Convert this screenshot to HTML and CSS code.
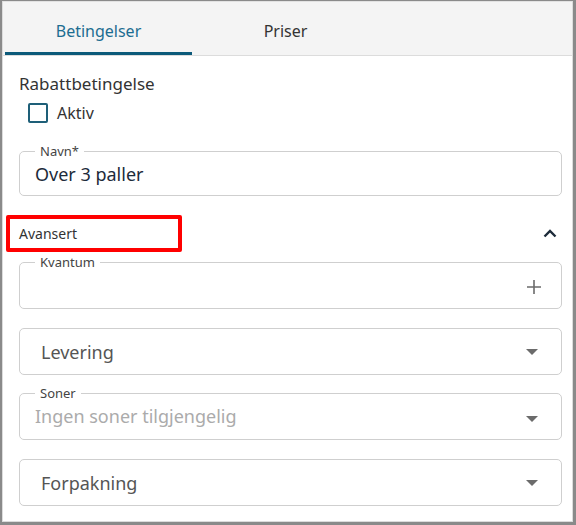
FILE: index.html
```html
<!DOCTYPE html>
<html lang="no">
<head>
<meta charset="utf-8">
<link rel="stylesheet" href="styles.css">
</head>
<body>
<div class="frame">
  <div class="panel">
    <div class="tabs">
      <div class="tab active">Betingelser</div>
      <div class="tab">Priser</div>
    </div>
    <div class="content">
      <div class="title">Rabattbetingelse</div>
      <label class="check-row">
        <span class="checkbox"></span>
        <span class="check-label">Aktiv</span>
      </label>
      <fieldset class="field field-navn">
        <legend>Navn*</legend>
        <div class="value">Over 3 paller</div>
      </fieldset>
      <div class="section-head">
        <span class="section-title">Avansert</span>
        <span class="highlight"></span>
        <svg class="chevron" width="14" height="9" viewBox="0 0 14 9"><path d="M1.5 7.5 L7 2 L12.5 7.5" fill="none" stroke="#1d2b3a" stroke-width="2.4"/></svg>
      </div>
      <fieldset class="field field-kvantum">
        <legend>Kvantum</legend>
        <div class="value empty"></div>
        <svg class="plus" width="14" height="14" viewBox="0 0 14 14"><path d="M7 0 V14 M0 7 H14" stroke="#6b6b6b" stroke-width="1.6"/></svg>
      </fieldset>
      <div class="select">
        <span class="select-text">Levering</span>
        <span class="caret"></span>
      </div>
      <fieldset class="field field-soner">
        <legend>Soner</legend>
        <div class="value placeholder">Ingen soner tilgjengelig</div>
        <span class="caret"></span>
      </fieldset>
      <div class="select">
        <span class="select-text">Forpakning</span>
        <span class="caret"></span>
      </div>
    </div>
  </div>
</div>
</body>
</html>
```

FILE: styles.css
```css
* { box-sizing: border-box; }
html, body { margin: 0; padding: 0; background: #fff; }
body { font-family: "Noto Sans", "Open Sans", sans-serif; color: #333; }

.frame {
  width: 576px;
  height: 525px;
  border: 2px solid #8a8a8a;
  border-top-width: 1px;
  border-bottom-width: 3px;
  border-right-width: 3px;
}
.panel {
  height: 100%;
  border: 1px solid #dcdcdc;
  border-top: 0;
  display: flex;
  flex-direction: column;
}
.tabs {
  display: flex;
  height: 55px;
  background: #f4f4f4;
  border-top: 1px solid #e2e2e2;
  border-bottom: 1px solid #dcdcdc;
  padding: 0 2px;
}
.tab {
  width: 187px;
  display: flex;
  align-items: center;
  justify-content: center;
  font-size: 16px;
  color: #333;
  padding-top: 4px;
}
.tab.active {
  color: #1c6d91;
  box-shadow: inset 0 -3px 0 #0c5a7a;
}

.content {
  display: flex;
  flex-direction: column;
  padding: 0 10px 0 16px;
}
.title {
  margin-top: 18px;
  font-size: 17px;
  line-height: 20px;
  color: #333;
}
.check-row {
  margin-top: 9px;
  display: flex;
  align-items: center;
  gap: 9px;
  padding-left: 9px;
  height: 20px;
}
.checkbox {
  width: 20px;
  height: 20px;
  border: 2px solid #1e5f78;
  border-radius: 2px;
}
.check-label { font-size: 16px; color: #333; }

.field {
  margin: 0;
  border: 1px solid #cfcfcf;
  border-radius: 5px;
  padding: 0 14px 0 15px;
  position: relative;
  min-width: 0;
}
.field legend {
  font-size: 13px;
  line-height: 14px;
  color: #444;
  padding: 0 5px;
}
.field .value {
  font-size: 18px;
  line-height: 20px;
  color: #1d2b3a;
}
.field-navn { margin-top: 21px; }
.field-navn .value { padding: 6px 0 11px; }

.section-head {
  position: relative;
  margin-top: 25px;
  height: 24px;
  display: flex;
  align-items: center;
  justify-content: space-between;
  padding-right: 5px;
}
.section-title { font-size: 14px; color: #333; }
.highlight {
  position: absolute;
  left: -13px;
  top: -6px;
  width: 176px;
  height: 37px;
  border: 4px solid #ff0000;
  border-radius: 2px;
}
.chevron { margin-top: 1px; }

.field-kvantum { margin-top: 10px; height: 54px; }
.field-kvantum .value { height: 20px; }
.plus {
  position: absolute;
  right: 20px;
  top: 11px;
}

.select {
  margin-top: 19px;
  height: 47px;
  border: 1px solid #cfcfcf;
  border-radius: 5px;
  display: flex;
  align-items: center;
  justify-content: space-between;
  padding: 0 23px 0 21px;
}
.select-text { font-size: 18px; color: #555; }
.caret {
  width: 0;
  height: 0;
  border-left: 6px solid transparent;
  border-right: 6px solid transparent;
  border-top: 6px solid #6b6b6b;
}
.field-soner { margin-top: 11px; height: 54px; }
.field-soner .value.placeholder { color: #ababab; padding-top: 6px; }
.field-soner .caret {
  position: absolute;
  right: 23px;
  top: 16px;
}
```
